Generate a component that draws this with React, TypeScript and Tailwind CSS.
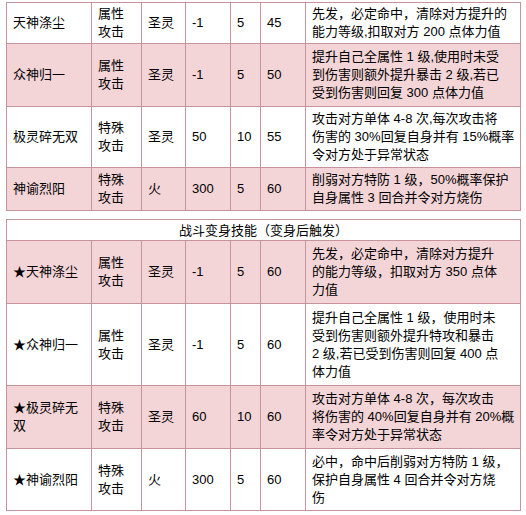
import React from "react";

type Row = {
  name: string;
  kind: string;
  attr: string;
  power: string;
  pp: string;
  cost: string;
  desc: string[];
  pink: boolean;
  h: string;
};

const normalRows: Row[] = [
  {
    name: "天神涤尘",
    kind: "属性攻击",
    attr: "圣灵",
    power: "-1",
    pp: "5",
    cost: "45",
    desc: ["先发，必定命中，清除对方提升的", "能力等级,扣取对方 200 点体力值"],
    pink: false,
    h: "h-[41px]",
  },
  {
    name: "众神归一",
    kind: "属性攻击",
    attr: "圣灵",
    power: "-1",
    pp: "5",
    cost: "50",
    desc: [
      "提升自己全属性 1 级,使用时未受",
      "到伤害则额外提升暴击 2 级,若已",
      "受到伤害则回复 300 点体力值",
    ],
    pink: true,
    h: "h-[63px]",
  },
  {
    name: "极灵碎无双",
    kind: "特殊攻击",
    attr: "圣灵",
    power: "50",
    pp: "10",
    cost: "55",
    desc: [
      "攻击对方单体 4-8 次,每次攻击将",
      "伤害的 30%回复自身并有 15%概率",
      "令对方处于异常状态",
    ],
    pink: false,
    h: "h-[61px]",
  },
  {
    name: "神谕烈阳",
    kind: "特殊攻击",
    attr: "火",
    power: "300",
    pp: "5",
    cost: "60",
    desc: ["削弱对方特防 1 级，50%概率保护", "自身属性 3 回合并令对方烧伤"],
    pink: true,
    h: "h-[43px]",
  },
];

const changedRows: Row[] = [
  {
    name: "★天神涤尘",
    kind: "属性攻击",
    attr: "圣灵",
    power: "-1",
    pp: "5",
    cost: "60",
    desc: ["先发，必定命中，清除对方提升", "的能力等级，扣取对方 350 点体", "力值"],
    pink: true,
    h: "h-[63px]",
  },
  {
    name: "★众神归一",
    kind: "属性攻击",
    attr: "圣灵",
    power: "-1",
    pp: "5",
    cost: "60",
    desc: [
      "提升自己全属性 1 级，使用时未",
      "受到伤害则额外提升特攻和暴击",
      "2 级,若已受到伤害则回复 400 点",
      "体力值",
    ],
    pink: false,
    h: "h-[82px]",
  },
  {
    name: "★极灵碎无双",
    kind: "特殊攻击",
    attr: "圣灵",
    power: "60",
    pp: "10",
    cost: "60",
    desc: [
      "攻击对方单体 4-8 次，每次攻击",
      "将伤害的 40%回复自身并有 20%概",
      "率令对方处于异常状态",
    ],
    pink: true,
    h: "h-[63px]",
  },
  {
    name: "★神谕烈阳",
    kind: "特殊攻击",
    attr: "火",
    power: "300",
    pp: "5",
    cost: "60",
    desc: ["必中，命中后削弱对方特防 1 级，", "保护自身属性 4 回合并令对方烧", "伤"],
    pink: false,
    h: "h-[62px]",
  },
];

const cell = "border border-[#c4939c] px-[6px] align-middle";

function Cols() {
  return (
    <colgroup>
      <col className="w-[85px]" />
      <col className="w-[50px]" />
      <col className="w-[44px]" />
      <col className="w-[45px]" />
      <col className="w-[30px]" />
      <col className="w-[45px]" />
      <col className="w-[215px]" />
    </colgroup>
  );
}

function SkillRow({ row }: { row: Row }) {
  return (
    <tr className={`${row.h} ${row.pink ? "bg-[#f3d4d7]" : "bg-white"}`}>
      <td className={cell}>{row.name}</td>
      <td className={cell}>
        {row.kind.slice(0, 2)}
        <br />
        {row.kind.slice(2)}
      </td>
      <td className={cell}>{row.attr}</td>
      <td className={cell}>{row.power}</td>
      <td className={cell}>{row.pp}</td>
      <td className={cell}>{row.cost}</td>
      <td className={cell}>
        {row.desc.map((line, i) => (
          <div key={i} className="whitespace-nowrap">
            {line}
          </div>
        ))}
      </td>
    </tr>
  );
}

export default function App() {
  return (
    <div className="w-[526px] h-[515px] overflow-hidden bg-white pt-[2px] text-[13px] leading-[18px] text-black font-['Liberation_Sans','Noto_Sans_CJK_SC',sans-serif]">
      <table className="ml-[6px] w-[514px] table-fixed border-collapse">
        <Cols />
        <tbody>
          {normalRows.map((r) => (
            <SkillRow key={r.name} row={r} />
          ))}
        </tbody>
      </table>
      <table className="ml-[6px] mt-[8px] w-[514px] table-fixed border-collapse">
        <Cols />
        <tbody>
          <tr className="h-[21px] bg-white">
            <td colSpan={7} className={`${cell} text-center pt-[1px]`}>
              战斗变身技能（变身后触发）
            </td>
          </tr>
          {changedRows.map((r) => (
            <SkillRow key={r.name} row={r} />
          ))}
        </tbody>
      </table>
    </div>
  );
}
